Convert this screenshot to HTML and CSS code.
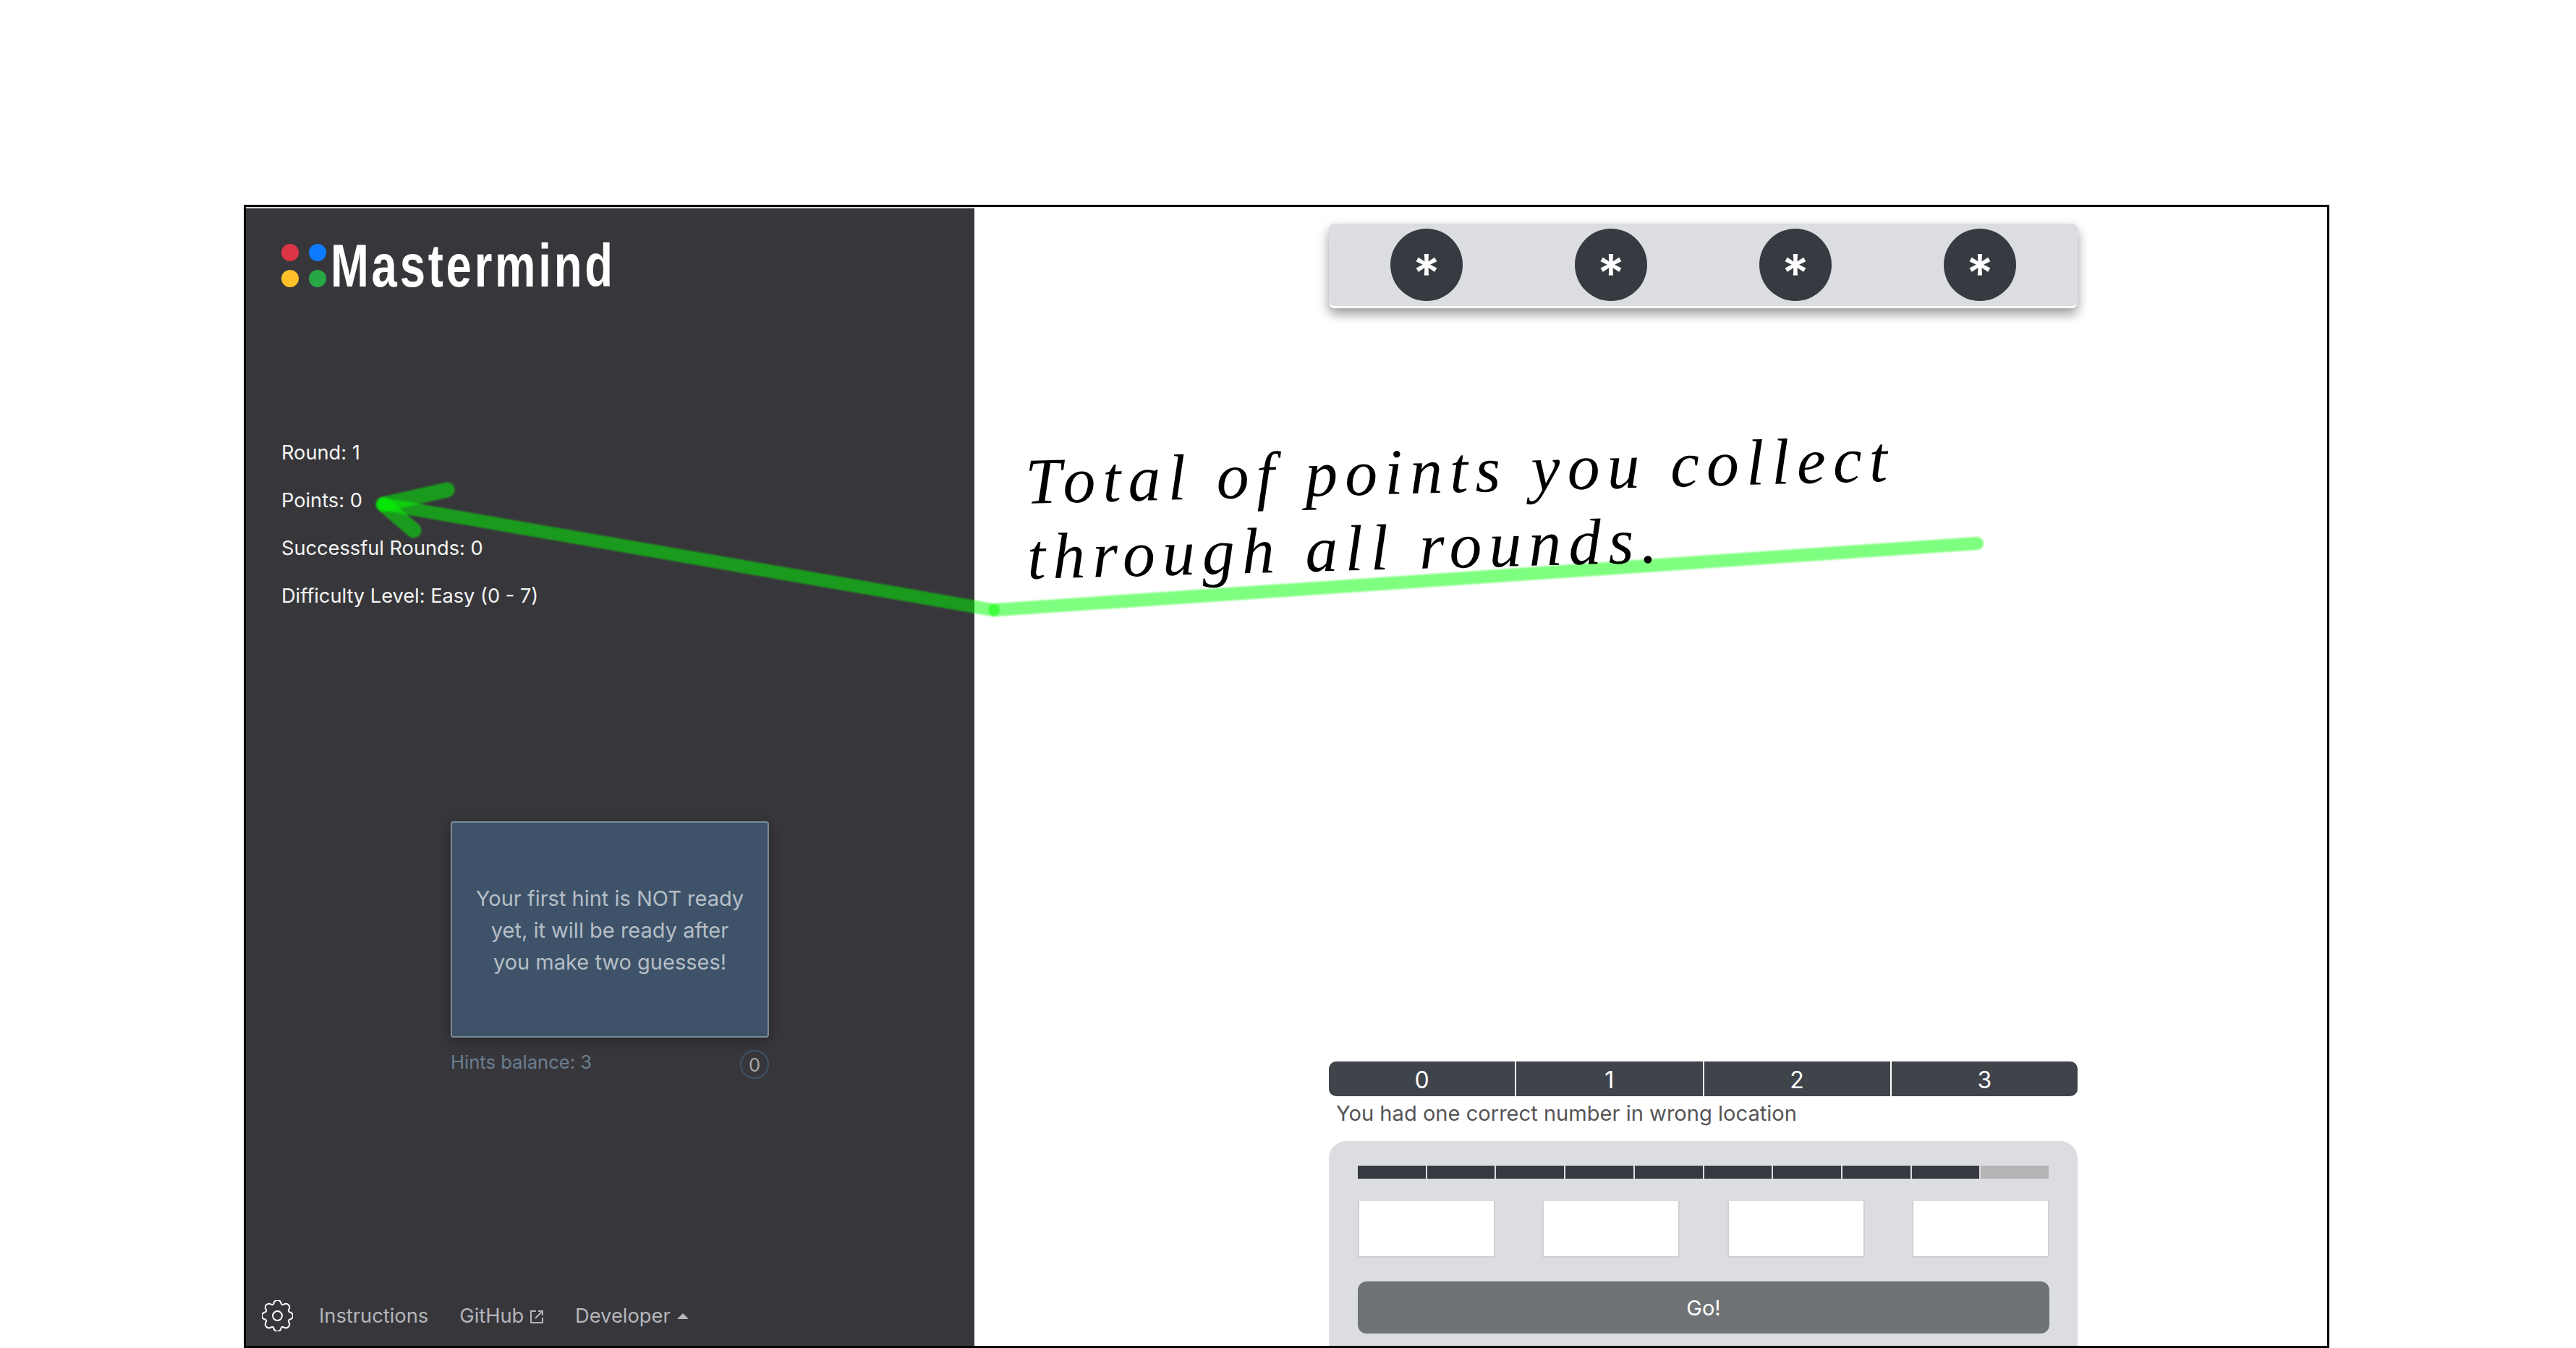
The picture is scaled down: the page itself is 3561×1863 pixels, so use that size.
FILE: index.html
```html
<!DOCTYPE html>
<html>
	<head>
		<title>Mastermind</title>
		<link rel="stylesheet" href="styles.css">
	</head>

	<body>
		<div class="frame">
			<div class="sidebar">
				<div class="logo">
					<div class="logo_dots">
						<span class="dot dot_red"></span>
						<span class="dot dot_blue"></span>
						<span class="dot dot_yellow"></span>
						<span class="dot dot_green"></span>
					</div>
					<span class="logo_text">Mastermind</span>
				</div>

				<div class="stats">
					<div class="stat">Round: 1</div>
					<div class="stat">Points: 0</div>
					<div class="stat">Successful Rounds: 0</div>
					<div class="stat">Difficulty Level: Easy (0 - 7)</div>
				</div>

				<div class="hints">
					<div class="hint_card">Your first hint is NOT ready yet, it will be ready after you make two guesses!</div>
					<div class="hint_footer">
						<span>Hints balance: 3</span>
						<span class="hint_badge">0</span>
					</div>
				</div>

				<div class="footer">
					<svg class="gear" viewBox="0 0 16 16" fill="none" stroke="#fff" stroke-width="0.75">
						<circle cx="8" cy="8" r="2.4"/>
						<path d="M9.796 1.343c-.527-1.79-3.065-1.79-3.592 0l-.094.319a.873.873 0 0 1-1.255.52l-.292-.16c-1.64-.892-3.433.902-2.54 2.541l.159.292a.873.873 0 0 1-.52 1.255l-.319.094c-1.79.527-1.79 3.065 0 3.592l.319.094a.873.873 0 0 1 .52 1.255l-.16.292c-.892 1.64.901 3.434 2.541 2.54l.292-.159a.873.873 0 0 1 1.255.52l.094.319c.527 1.79 3.065 1.79 3.592 0l.094-.319a.873.873 0 0 1 1.255-.52l.292.16c1.64.893 3.434-.902 2.54-2.541l-.159-.292a.873.873 0 0 1 .52-1.255l.319-.094c1.79-.527 1.79-3.065 0-3.592l-.319-.094a.873.873 0 0 1-.52-1.255l.16-.292c.893-1.64-.902-3.433-2.541-2.54l-.292.159a.873.873 0 0 1-1.255-.52l-.094-.319z"/>
					</svg>
					<span class="nav_link">Instructions</span>
					<span class="nav_link">GitHub
						<svg class="ext_icon" viewBox="0 0 20 20" fill="none" stroke="#b5b5ba" stroke-width="2">
							<path d="M9 2H2v16h16v-7"/>
							<path d="M8 12 18 2M12 2h6v6"/>
						</svg>
					</span>
					<span class="nav_link">Developer <span class="caret"></span></span>
				</div>
			</div>

			<div class="main">
				<div class="secret">
					<div class="secret_ball">*</div>
					<div class="secret_ball">*</div>
					<div class="secret_ball">*</div>
					<div class="secret_ball">*</div>
				</div>

				<div class="score">
					<div class="score_cell">0</div>
					<div class="score_cell">1</div>
					<div class="score_cell">2</div>
					<div class="score_cell">3</div>
				</div>
				<div class="message">You had one correct number in wrong location</div>

				<div class="panel">
					<div class="progress">
						<span class="step"></span><span class="step"></span><span class="step"></span>
						<span class="step"></span><span class="step"></span><span class="step"></span>
						<span class="step"></span><span class="step"></span><span class="step"></span>
						<span class="step step_empty"></span>
					</div>
					<div class="guesses">
						<input class="guess" type="text">
						<input class="guess" type="text">
						<input class="guess" type="text">
						<input class="guess" type="text">
					</div>
					<button class="go" type="button">Go!</button>
				</div>
			</div>

			<!-- annotation drawn over the app -->
			<svg class="arrow" viewBox="0 0 2883 1574">
				<g stroke="#00ff00" stroke-opacity="0.5" stroke-linecap="round" fill="none">
					<line stroke-width="18" x1="2393" y1="465" x2="1035" y2="557"/>
					<line stroke-width="18" x1="1033" y1="557" x2="192" y2="411"/>
					<line stroke-width="21" x1="190" y1="411" x2="278" y2="391"/>
					<line stroke-width="21" x1="190" y1="411" x2="232" y2="447"/>
				</g>
			</svg>
			<div class="note">Total of points you collect<br>through all rounds.</div>
		</div>
	</body>
</html>
```

FILE: styles.css
```css
* {
	box-sizing: border-box;
}

html, body {
	height: 100%;
}

body {
	margin: 0;
	padding: 283px 341px 0 337px;
	background-color: #fff;
	font-family: "Inter", "Liberation Sans", sans-serif;
	overflow: hidden;
}

.frame {
	position: relative;
	display: flex;
	height: 1580px;
	border: 3px solid #000;
	overflow: hidden;
}

/* left column */
.sidebar {
	display: flex;
	flex-direction: column;
	flex: 0 0 1007px;
	padding: 0 0 0 49px;
	background-color: #37373b;
	border-top: 2px solid #d8d8d8;
	color: #fff;
}

.logo {
	display: flex;
	align-items: center;
	gap: 6px;
	margin-top: 35px;
	height: 88px;
}

.logo_dots {
	display: grid;
	grid-template-columns: 24px 24px;
	gap: 12px 14px;
}

.dot {
	width: 24px;
	height: 24px;
	border-radius: 50%;
}

.dot_red { background-color: #dc3545; }
.dot_blue { background-color: #0d7bff; }
.dot_yellow { background-color: #ffc02a; }
.dot_green { background-color: #28a745; }

.logo_text {
	display: inline-block;
	transform: scaleX(0.755);
	transform-origin: left center;
	font-family: "Liberation Sans", sans-serif;
	font-size: 84px;
	font-weight: 700;
	line-height: 88px;
	letter-spacing: 5px;
}

.stats {
	margin-top: 182px;
}

.stat {
	height: 66px;
	line-height: 66px;
	font-size: 27.2px;
	color: #f4f4f4;
}

.hints {
	width: 440px;
	margin-top: 278px;
	margin-left: 234px;
}

.hint_card {
	display: flex;
	align-items: center;
	justify-content: center;
	height: 299px;
	padding: 3px 30px 0;
	background-color: #3e5369;
	border: 2px solid #7c8a97;
	border-radius: 4px;
	box-shadow: 0 4px 16px rgba(0,0,0,0.3);
	color: #b5bec6;
	font-size: 29px;
	line-height: 44px;
	text-align: center;
}

.hint_footer {
	display: flex;
	justify-content: space-between;
	align-items: flex-start;
	margin-top: 17px;
	color: #6b7f92;
	font-size: 25.6px;
	line-height: 34px;
}

.hint_badge {
	width: 40px;
	height: 40px;
	border: 2px solid #3e5369;
	border-radius: 50%;
	color: #a8a8a8;
	line-height: 38px;
	text-align: center;
}

.footer {
	display: flex;
	align-items: center;
	margin-top: auto;
	margin-left: -27px;
	height: 44px;
	margin-bottom: 20px;
	color: #b5b5ba;
	font-size: 27.3px;
}

.gear {
	width: 43px;
	height: 43px;
	margin-right: 36px;
}

.nav_link {
	margin-right: 43px;
	white-space: nowrap;
}

.ext_icon {
	width: 20px;
	height: 20px;
	vertical-align: -2px;
}

.caret {
	display: inline-block;
	width: 0;
	height: 0;
	margin-left: 2px;
	vertical-align: 5px;
	border-left: 8px solid transparent;
	border-right: 8px solid transparent;
	border-bottom: 8px solid #b5b5ba;
}

/* right column */
.main {
	display: flex;
	flex-direction: column;
	flex: 1;
	padding: 23px 0 0 490px;
	background-color: #fff;
}

.secret {
	display: flex;
	justify-content: space-between;
	align-items: center;
	width: 1035px;
	height: 117px;
	padding: 0 85px;
	background-color: #dcdde1;
	border-bottom: 3px solid #fff;
	border-radius: 8px;
	box-shadow: 0 8px 16px rgba(0,0,0,0.4);
}

.secret_ball {
	display: flex;
	align-items: center;
	justify-content: center;
	width: 100px;
	height: 100px;
	padding-top: 22px;
	background-color: #363a41;
	border-radius: 50%;
	color: #fff;
	font-size: 72px;
	font-weight: 600;
	line-height: 76px;
}

.score {
	display: flex;
	width: 1035px;
	height: 48px;
	margin-top: auto;
	background-color: #3f444a;
	border-radius: 10px;
	overflow: hidden;
}

.score_cell {
	flex: 1;
	border-right: 2px solid #fff;
	color: #fff;
	font-size: 32px;
	line-height: 52px;
	text-align: center;
}

.score_cell:last-child {
	border-right: 0;
}

.message {
	height: 62px;
	padding-left: 10px;
	color: #555;
	font-size: 29.1px;
	line-height: 48px;
}

.panel {
	width: 1035px;
	height: 283px;
	padding: 34px 40px 17px;
	background-color: #dcdde1;
	border-radius: 24px 24px 0 0;
}

.progress {
	display: flex;
	height: 18px;
	width: 955px;
}

.step {
	flex: 1;
	background-color: #363a40;
	border-right: 2px solid #dcdde1;
}

.step_empty {
	background-color: #b5b5b5;
	border-right: 0;
}

.guesses {
	display: flex;
	justify-content: space-between;
	width: 956px;
	margin-top: 31px;
}

.guess {
	width: 190px;
	height: 78px;
	background-color: #fff;
	border: 0;
	border-bottom: 2px solid #cfd0d4;
	border-left: 2px solid #cfd0d4;
	border-right: 2px solid #cfd0d4;
}

.go {
	display: block;
	width: 956px;
	height: 72px;
	margin-top: 33px;
	background-color: #6f7375;
	border: 0;
	border-radius: 12px;
	color: #fff;
	font-family: inherit;
	font-size: 29px;
}

/* annotation */
.arrow {
	position: absolute;
	top: 0;
	left: 0;
	width: 2883px;
	height: 1574px;
	filter: blur(1px);
}

.note {
	position: absolute;
	left: 1076px;
	top: 328px;
	transform: rotate(-1.5deg);
	transform-origin: left top;
	color: #000;
	font-family: "Liberation Serif", serif;
	font-style: italic;
	font-size: 90px;
	line-height: 104px;
	letter-spacing: 10px;
	white-space: nowrap;
}
```
